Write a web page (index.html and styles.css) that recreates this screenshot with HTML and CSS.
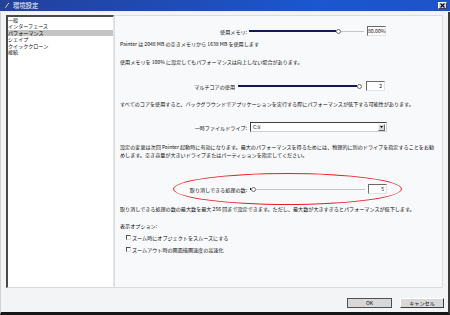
FILE: index.html
```html
<!DOCTYPE html>
<html lang="ja">

<head>
    <meta charset="UTF-8">
    <meta name="viewport" content="width=device-width, initial-scale=1.0">
    <title>環境設定</title>
    <link rel="stylesheet" href="styles.css">
</head>

<body>
    <div class="window">
        <!-- タイトルバー -->
        <div class="titlebar">
            <svg class="app-icon" width="7" height="8" viewBox="0 0 7 8">
                <path d="M1 7.5 L2 5 L5.5 0.5 L6.5 1.3 L3 5.8 Z" fill="#f4f4f4" stroke="#222" stroke-width="0.6"/>
            </svg>
            <span class="title">環境設定</span>
            <span class="close">
                <svg width="5" height="5" viewBox="0 0 5 5">
                    <path d="M0.5 0.5 L4.5 4.5 M4.5 0.5 L0.5 4.5" stroke="#000" stroke-width="1.1"/>
                </svg>
            </span>
        </div>

        <div class="frame">
            <div class="content">
                <!-- 左のカテゴリ一覧 -->
                <ul class="category-list">
                    <li>一般</li>
                    <li>インターフェース</li>
                    <li class="select">パフォーマンス</li>
                    <li>シェイプ</li>
                    <li>クイッククローン</li>
                    <li>接続</li>
                </ul>

                <!-- 右の設定パネル -->
                <div class="panel">
                    <div class="setting memory">
                        <span class="label">使用メモリ:</span>
                        <div class="slider">
                            <span class="fill" style="width: 87px"></span>
                            <span class="thumb"></span>
                            <span class="rest"></span>
                        </div>
                        <span class="value">80.00%</span>
                    </div>
                    <p class="note mem-info">Painter は 2048 MB の空きメモリから 1638 MB を使用します</p>
                    <p class="note mem-warn">使用メモリを 100% に設定してもパフォーマンスは向上しない場合があります。</p>

                    <div class="setting cores">
                        <span class="label">マルチコアの使用</span>
                        <div class="slider">
                            <span class="fill" style="width: 119px"></span>
                            <span class="thumb"></span>
                            <span class="rest"></span>
                        </div>
                        <span class="value">2</span>
                    </div>
                    <p class="note cores-info">すべてのコアを使用すると、バックグラウンドでアプリケーションを実行する際にパフォーマンスが低下する可能性があります。</p>

                    <div class="setting drive">
                        <span class="label">一時ファイルドライブ:</span>
                        <div class="select-box">
                            <span class="select-text">C:¥</span>
                            <span class="select-arrow">
                                <svg width="3" height="2" viewBox="0 0 3 2"><path d="M0 0 H3 L1.5 2 Z" fill="#000"/></svg>
                            </span>
                        </div>
                    </div>
                    <p class="note drive-info">設定の変更は次回 Painter 起動時に有効になります。最大のパフォーマンスを得るためには、物理的に別のドライブを指定することをお勧<br>めします。空き容量が大きいドライブまたはパーティションを指定してください。</p>

                    <div class="setting undo">
                        <span class="label">取り消しできる処理の数:</span>
                        <div class="slider">
                            <span class="fill" style="width: 1px"></span>
                            <span class="thumb"></span>
                            <span class="rest"></span>
                        </div>
                        <span class="value">5</span>
                    </div>
                    <p class="note undo-info">取り消しできる処理の数の最大数を最大 256 回まで設定できます。ただし、最大数が大きすぎるとパフォーマンスが低下します。</p>

                    <p class="note options-title">表示オプション:</p>
                    <label class="check first"><span class="box"></span>ズーム時にオブジェクトをスムーズにする</label>
                    <label class="check"><span class="box"></span>ズームアウト時の画面描画速度の高速化</label>

                    <!-- 赤い囲み（注釈） -->
                    <span class="mark"></span>
                </div>
            </div>

            <div class="buttons">
                <span class="btn ok">OK</span>
                <span class="btn">キャンセル</span>
            </div>
        </div>
    </div>
</body>

</html>
```

FILE: styles.css
```css
* {
    margin: 0;
    padding: 0;
    box-sizing: border-box;
}

ul {
    list-style: none;
}

body {
    width: 450px;
    height: 315px;
    overflow: hidden;
    background: #f3f4f5;
    font-family: "Noto Sans CJK JP", "Noto Sans", sans-serif;
    font-size: 5.1px;
    color: #0c0c0c;
}

.window {
    width: 450px;
    height: 315px;
    display: flex;
    flex-direction: column;
}

/* タイトルバー */
.titlebar {
    height: 12px;
    display: flex;
    align-items: center;
    padding-left: 3px;
    background: linear-gradient(to right, #22419c 0%, #1f4cb6 40%, #1b57cf 70%, #1d53c6 100%);
    border-bottom: 1px solid #e8ecf4;
}

.app-icon {
    display: block;
}

.title {
    margin-left: 3px;
    font-size: 6.3px;
    line-height: 11px;
    color: #fff;
}

.close {
    margin-left: auto;
    margin-right: 3px;
    width: 9px;
    height: 7px;
    display: flex;
    align-items: center;
    justify-content: center;
    background: #d8d8d8;
    border: 1px solid;
    border-color: #fff #404040 #404040 #fff;
}

.close svg {
    display: block;
}

.frame {
    flex: 1;
    display: flex;
    flex-direction: column;
    border-left: 1px solid #d2d2d2;
    border-right: 2px solid #3a3a3a;
    border-bottom: 3px solid #161616;
}

.content {
    display: flex;
    padding: 3px 5px 0 5px;
}

/* カテゴリ一覧 */
.category-list {
    width: 108px;
    height: 273px;
    background: #fff;
    border-top: 2px solid #4a4a4a;
    border-left: 2px solid #4a4a4a;
    border-right: 1px solid #e6e6e6;
    border-bottom: 1px solid #d8d8d8;
}

.category-list li {
    height: 6.4px;
    line-height: 6.4px;
    white-space: nowrap;
}

.category-list .select {
    background-color: #c4c4c4;
}

/* 設定パネル */
.panel {
    flex: 1;
    height: 273px;
    position: relative;
    background: #f8f9fa;
    border: 1px solid #dcdcdc;
    padding: 10px 0 0 5px;
}

.note {
    line-height: 7px;
    white-space: nowrap;
}

.setting {
    display: flex;
    align-items: center;
    height: 10px;
}

.setting .label {
    width: 127px;
    text-align: right;
    white-space: nowrap;
}

.slider {
    display: flex;
    align-items: center;
    width: 115px;
    margin-left: 2px;
}

.slider .fill {
    height: 2px;
    background: #16165a;
}

.slider .thumb {
    width: 5px;
    height: 5px;
    flex: none;
    border-radius: 50%;
    border: 1px solid #6e6e6e;
    background: #fff;
}

.slider .rest {
    flex: 1;
    height: 1px;
    background: #c6c6c6;
}

.value {
    width: 19px;
    height: 10px;
    margin-left: 3px;
    padding-right: 2px;
    line-height: 8px;
    text-align: right;
    background: #fff;
    border: 1px solid;
    border-color: #6a6a6a #e2e2e2 #e2e2e2 #6a6a6a;
}

.cores .label {
    width: 115px;
}

.cores .slider {
    width: 124px;
    margin-left: 3px;
}

.cores .value {
    margin-left: 4px;
}

.undo .slider {
    margin-left: 3px;
}

.select-box {
    display: flex;
    align-items: center;
    width: 137px;
    height: 10px;
    margin-left: 3px;
    background: #fff;
    border: 1px solid;
    border-color: #404040 #d0d0d0 #d0d0d0 #404040;
}

.select-text {
    padding-left: 2px;
    line-height: 8px;
}

.select-arrow {
    margin-left: auto;
    margin-right: 1px;
    width: 7px;
    height: 7px;
    display: flex;
    align-items: center;
    justify-content: center;
    background: #d6d6d6;
    border: 1px solid;
    border-color: #f4f4f4 #6a6a6a #6a6a6a #f4f4f4;
}

.select-arrow svg {
    display: block;
}

/* 縦の間隔 */
.mem-info {
    margin-top: 4px;
}

.mem-warn {
    margin-top: 11px;
}

.cores {
    margin-top: 16px;
}

.cores-info {
    margin-top: 9px;
}

.drive {
    margin-top: 15px;
}

.drive-info {
    margin-top: 11px;
    line-height: 8px;
}

.undo {
    margin-top: 25px;
}

.undo-info {
    margin-top: 11px;
}

.options-title {
    margin-top: 10px;
}

.check {
    display: flex;
    align-items: center;
    height: 8px;
    margin-top: 4px;
    padding-left: 6px;
    white-space: nowrap;
}

.check .box {
    width: 5px;
    height: 5px;
    margin-right: 1px;
    background: #fff;
    border: 1px solid;
    border-color: #505050 #e0e0e0 #e0e0e0 #505050;
}

/* 赤い囲み */
.mark {
    position: absolute;
    left: 58px;
    top: 157px;
    width: 229px;
    height: 32px;
    border: 1.3px solid #ea1f26;
    border-radius: 50%;
}

/* ボタン */
.buttons {
    display: flex;
    justify-content: flex-end;
    gap: 8px;
    margin-top: 10px;
    padding-right: 4px;
}

.btn {
    width: 44px;
    height: 10px;
    line-height: 8px;
    text-align: center;
    background: #d8d8d8;
    border: 1px solid;
    border-color: #fff #3c3c3c #3c3c3c #fff;
}

.btn.ok {
    width: 45px;
    outline: 1px solid #505050;
    outline-offset: -1px;
}
```
